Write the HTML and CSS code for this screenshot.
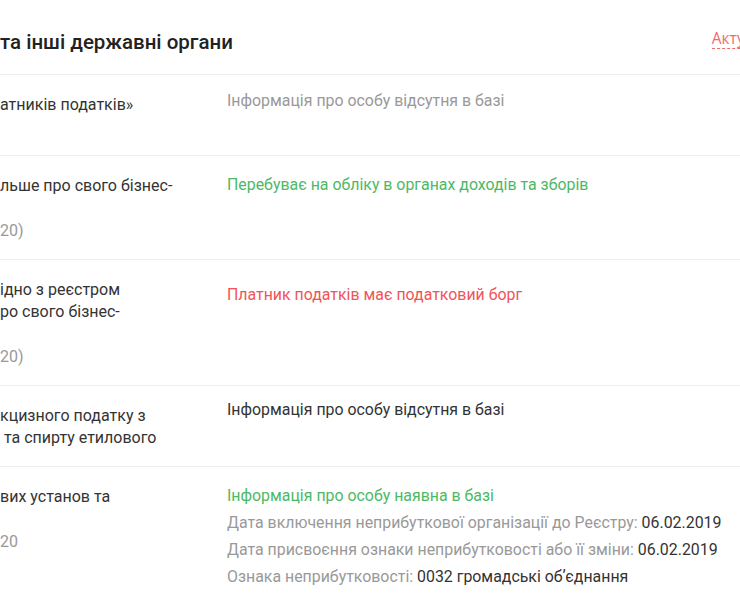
FILE: index.html
```html
<!DOCTYPE html>
<html lang="uk">
<head>
  <meta charset="UTF-8">
  <title>Податкова та інші державні органи</title>
  <link rel="stylesheet" href="styles.css">
</head>
<body>

<div class="page">
  <header class="block-head">
    <h2>та інші державні органи</h2>
    <a href="#" class="refresh">Актуалізувати</a>
  </header>

  <!-- ========= ROWS ========= -->
  <div class="row">
    <div class="label">
      <div>атників податків»</div>
      <div>&nbsp;</div>
    </div>
    <div class="value value--r1">
      <div class="muted">Інформація про особу відсутня в базі</div>
    </div>
  </div>

  <div class="row">
    <div class="label">
      <div>льше про свого бізнес-</div>
      <div>&nbsp;</div>
      <div class="date">20)</div>
    </div>
    <div class="value value--r2">
      <div class="ok">Перебуває на обліку в органах доходів та зборів</div>
    </div>
  </div>

  <div class="row">
    <div class="label">
      <div>ідно з реєстром</div>
      <div>ро свого бізнес-</div>
      <div>&nbsp;</div>
      <div class="date">20)</div>
    </div>
    <div class="value value--r3">
      <div class="bad">Платник податків має податковий борг</div>
    </div>
  </div>

  <div class="row">
    <div class="label">
      <div>кцизного податку з</div>
      <div>&nbsp;та спирту етилового</div>
    </div>
    <div class="value value--r4">
      <div>Інформація про особу відсутня в базі</div>
    </div>
  </div>

  <div class="row row--top">
    <div class="label">
      <div>вих установ та</div>
      <div>&nbsp;</div>
      <div class="date">20</div>
    </div>
    <div class="value value--r5">
      <div class="ok">Інформація про особу наявна в базі</div>
      <div class="line"><span class="muted">Дата включення неприбуткової організації до Реєстру:</span> 06.02.2019</div>
      <div class="line"><span class="muted">Дата присвоєння ознаки неприбутковості або її зміни:</span> 06.02.2019</div>
      <div class="line"><span class="muted">Ознака неприбутковості:</span> 0032 громадські обʼєднання</div>
    </div>
  </div>
</div>

</body>
</html>
```

FILE: styles.css
```css
/* ---------- base ---------- */
html, body {
  margin: 0;
  padding: 0;
  background: #fff;
  color: #333;
  font-family: Roboto, "Noto Sans", Arial, sans-serif;
  font-size: 16px;
  overflow: hidden;
}

.page { width: 816px; }

/* header of the block */
.block-head {
  box-sizing: border-box;
  display: flex;
  justify-content: space-between;
  align-items: center;
  height: 75px;
  padding-top: 10px;
  border-bottom: 1px solid #eeeeee;
}
.block-head h2 { margin: 0; font-size: 20.5px; font-weight: 500; color: #222; }
.refresh {
  font-family: "Open Sans", sans-serif;
  font-size: 15.5px;
  color: #f26a6a;
  text-decoration: none;
  border-bottom: 1px dashed #f26a6a;
  line-height: 19px;
  margin-top: -6px;
}

/* rows */
.row { display: flex; align-items: center; border-bottom: 1px solid #eeeeee; }
.row--top { align-items: flex-start; border-bottom: 0; }
.label { width: 227px; flex-shrink: 0; padding: 19px 0 16px; line-height: 22.5px; color: #333; }
.value { flex: 1; line-height: 22px; align-self: flex-start; font-size: 15.9px; }
.value--r1 { padding-top: 15px; }
.value--r2 { padding-top: 18px; }
.value--r3 { padding-top: 24px; }
.value--r4 { padding-top: 13px; }
.value--r5 { padding-top: 18px; }
.value .line { margin-top: 5px; }

.date { color: #999; }
.muted { color: #999; }
.ok { color: #4cb963; }
.bad { color: #ef5458; }
```
